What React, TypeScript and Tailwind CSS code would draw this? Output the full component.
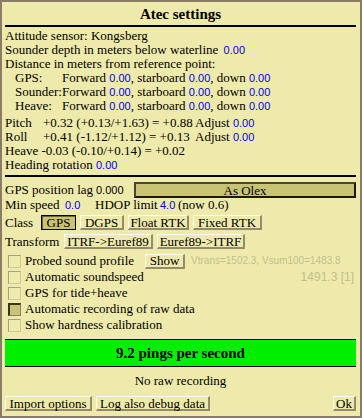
import React from "react";

const S = "font-['Liberation_Serif',serif]";
const SANS = "font-['Liberation_Sans',sans-serif]";

function Num({ children }: { children: React.ReactNode }) {
  return <span className={`${SANS} text-[11px] text-[#0000ee]`}>{children}</span>;
}

function Btn({
  children,
  pressed,
  className = "",
}: {
  children: React.ReactNode;
  pressed?: boolean;
  className?: string;
}) {
  return (
    <div
      className={
        pressed
          ? `h-[15px] flex items-center justify-center bg-[#c9c474] border border-black shadow-[inset_1px_1px_0_#6b6540] leading-none ${className}`
          : `h-[15px] flex items-center justify-center border-t border-l border-r-2 border-b-2 border-t-[#fffff2] border-l-[#fffff2] border-r-[#938b6c] border-b-[#938b6c] leading-none ${className}`
      }
    >
      {children}
    </div>
  );
}

function Check({ checked, label, children }: { checked?: boolean; label: string; children?: React.ReactNode }) {
  return (
    <div className="h-[16px] flex items-center">
      <div
        className={
          checked
            ? "ml-[3px] w-[13px] h-[13px] bg-[#c9c474] border-t-2 border-l-2 border-r border-b border-t-[#3a3620] border-l-[#3a3620] border-r-[#8a8360] border-b-[#8a8360]"
            : "ml-[3px] w-[13px] h-[13px] border-t border-l border-r border-b border-t-[#a9a17e] border-l-[#a9a17e] border-r-[#cfc99a] border-b-[#cfc99a]"
        }
      />
      <span className="ml-[4px] whitespace-nowrap">{label}</span>
      {children}
    </div>
  );
}

export default function App() {
  return (
    <div
      className={`${S} text-[13px] text-black w-[362px] h-[418px] bg-[#eeeaab] border-2 border-[#8b7c68] pl-[3px] pr-[4px] flex flex-col leading-[14px]`}
    >
      <div className="h-[23px] flex items-center justify-center font-bold text-[15px]">Atec settings</div>
      <div className="h-[2px] bg-black" />

      <div className="mt-[2px] h-[14px] whitespace-nowrap">Attitude sensor: Kongsberg</div>
      <div className="h-[14px] whitespace-nowrap">
        Sounder depth in meters below waterline <span className="ml-[2px]"><Num>0.00</Num></span>
      </div>
      <div className="h-[14px] whitespace-nowrap">Distance in meters from reference point:</div>
      {["GPS:", "Sounder:", "Heave:"].map((l) => (
        <div key={l} className="h-[14px] flex whitespace-nowrap">
          <span className="pl-[10px] w-[57px]">{l}</span>
          <span>
            Forward <Num>0.00</Num>, starboard <Num>0.00</Num>, down <Num>0.00</Num>
          </span>
        </div>
      ))}

      <div className="mt-[3px] h-[14px] flex whitespace-nowrap">
        <span className="w-[38px]">Pitch</span>
        <span className="w-[152px]">+0.32 (+0.13/+1.63) = +0.88</span>
        <span>
          Adjust <Num>0.00</Num>
        </span>
      </div>
      <div className="h-[14px] flex whitespace-nowrap">
        <span className="w-[38px]">Roll</span>
        <span className="w-[152px]">+0.41 (-1.12/+1.12) = +0.13</span>
        <span>
          Adjust <Num>0.00</Num>
        </span>
      </div>
      <div className="h-[14px] whitespace-nowrap">Heave -0.03 (-0.10/+0.14) = +0.02</div>
      <div className="h-[14px] whitespace-nowrap">
        Heading rotation <Num>0.00</Num>
      </div>

      <div className="mt-[3px] h-[2px] bg-black" />

      <div className="mt-[5px] h-[16px] flex items-center whitespace-nowrap">
        <span className="w-[91px]">GPS position lag</span>
        <span className={`${SANS} text-[11px] w-[38px]`}>0.000</span>
        <div className="flex-1 h-[16px] bg-[#c9c474] border-2 border-t-[#4a4630] border-l-[#4a4630] border-r-[#1a1a10] border-b-[#1a1a10] flex items-center justify-center leading-none">
          As Olex
        </div>
      </div>

      <div className="h-[14px] flex items-center whitespace-nowrap">
        <span className="w-[60px]">Min speed</span>
        <span className="w-[30px]">
          <Num>0.0</Num>
        </span>
        <span className="w-[65px]">HDOP limit</span>
        <span className="w-[18px]">
          <Num>4.0</Num>
        </span>
        <span>(now 0.6)</span>
      </div>

      <div className="mt-[3px] h-[15px] flex items-center whitespace-nowrap gap-[4px]">
        <span className="w-[32px]">Class</span>
        <Btn pressed className="w-[35px]">GPS</Btn>
        <Btn className="w-[44px]">DGPS</Btn>
        <Btn className="w-[61px]">Float RTK</Btn>
        <Btn className="w-[69px]">Fixed RTK</Btn>
      </div>

      <div className="mt-[4px] h-[15px] flex items-center whitespace-nowrap gap-[4px]">
        <span className="w-[55px]">Transform</span>
        <Btn className="w-[89px]">ITRF-&gt;Euref89</Btn>
        <Btn className="w-[88px]">Euref89-&gt;ITRF</Btn>
      </div>

      <div className="mt-[4px] flex flex-col">
        <Check label="Probed sound profile">
          <Btn className="ml-[11px] w-[40px]">Show</Btn>
          <span className={`${SANS} ml-[6px] text-[10px] text-[#c3bf8c]`}>Vtrans=1502.3, Vsum100=1483.8</span>
        </Check>
        <Check label="Automatic soundspeed">
          <span className={`${SANS} ml-auto mr-[2px] text-[12px] text-[#c3bf8c]`}>1491.3 [1]</span>
        </Check>
        <Check label="GPS for tide+heave" />
        <Check checked label="Automatic recording of raw data" />
        <Check label="Show hardness calibration" />
      </div>

      <div className="mt-[6px] h-[28px] bg-[#00ee00] border-t border-b border-black flex items-center justify-center font-bold text-[15px]">
        9.2 pings per second
      </div>

      <div className="h-[27px] flex items-center justify-center">No raw recording</div>

      <div className="mt-[2px] h-[15px] flex items-center gap-[4px] whitespace-nowrap">
        <Btn className="w-[87px]">Import options</Btn>
        <Btn className="w-[114px]">Log also debug data</Btn>
        <Btn className="ml-auto w-[23px]">Ok</Btn>
      </div>
    </div>
  );
}
